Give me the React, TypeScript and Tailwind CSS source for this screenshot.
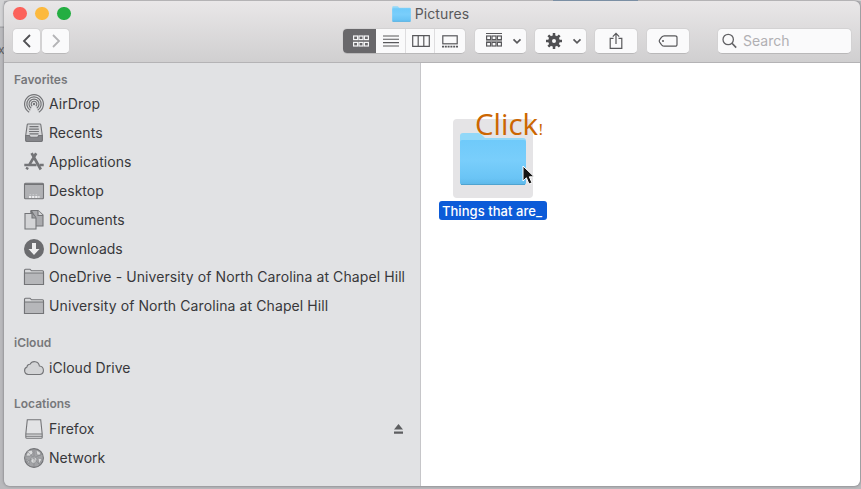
import type { ReactNode } from "react";

const dark = "#58585b";

function FolderBlue({ w, h }: { w: number; h: number }) {
  return (
    <svg width={w} height={h} viewBox="0 0 68 54" preserveAspectRatio="none">
      <defs>
        <linearGradient id="fb" x1="0" y1="0" x2="0" y2="1">
          <stop offset="0" stopColor="#6fcafa" />
          <stop offset="0.45" stopColor="#79cefb" />
          <stop offset="0.85" stopColor="#6ac4f5" />
          <stop offset="1" stopColor="#5db7e8" />
        </linearGradient>
      </defs>
      <path d="M1 4Q1 1 4 1H19Q22 1 24 4L26 6H64Q67 6 67 9V50Q67 53 64 53H4Q1 53 1 50Z" fill="#92d8f8" />
      <path d="M1 10Q1 8 3 8H65Q67 8 67 10V50Q67 53 64 53H4Q1 53 1 50Z" fill="url(#fb)" />
      <path d="M2 52.5H66" stroke="#4fa3d0" strokeWidth="1" />
    </svg>
  );
}

function Icon({ children }: { children: ReactNode }) {
  return (
    <svg className="shrink-0" width="22" height="22" viewBox="0 0 22 22" fill="none" stroke="#737477" strokeWidth="1.1">
      {children}
    </svg>
  );
}

const airdrop = (
  <Icon>
    <path d="M6.2 19.2A9.4 9.4 0 1 1 15.8 19.2M7.3 17.2A7.2 7.2 0 1 1 14.7 17.2M8.2 15.2A5 5 0 1 1 13.8 15.2M9.2 13.2A2.8 2.8 0 1 1 12.8 13.2" strokeWidth="1.2" />
    <circle cx="11" cy="11" r="1.2" fill="#737477" stroke="none" />
  </Icon>
);
const recents = (
  <Icon>
    <path d="M5 2H17Q17.7 2 17.8 2.8L19.3 13.5V18Q19.3 19.5 17.8 19.5H4.2Q2.7 19.5 2.7 18V13.5L4.2 2.8Q4.3 2 5 2Z" fill="#d5d6d8" />
    <path d="M2.7 13.5H6.3L7.3 15.3H14.7L15.7 13.5H19.3V18Q19.3 19.5 17.8 19.5H4.2Q2.7 19.5 2.7 18Z" fill="#85868a" />
    <path d="M6.5 4.7H15.5M6.2 7.1H15.8M6 9.5H16M6.5 11.9H15.5" strokeWidth="1.2" />
  </Icon>
);
const apps = (
  <Icon>
    <path d="M8.6 2.2L17.8 18.5M13.2 2.2L6.6 13.4M4.7 16.4L3.6 18.4" strokeWidth="2.7" />
    <path d="M1.3 14H13.5M16.5 14H20.7" strokeWidth="2.5" />
  </Icon>
);
const desktop = (
  <Icon>
    <rect x="1.5" y="3.3" width="19" height="15.5" rx="1" fill="#b0b1b4" />
    <path d="M2 4.4H20" strokeWidth="1.3" />
    <path d="M6 17H16.5" stroke="#ececee" strokeWidth="2" strokeDasharray="2.2 .9" />
    <path d="M6.5 14.7H15.5" stroke="#d2d3d5" strokeWidth=".8" strokeDasharray="1.6 1.4" />
  </Icon>
);
const documents = (
  <Icon>
    <path d="M8 1.5H15L20 6V17H8Z" fill="#aaabae" />
    <path d="M15 1.5V6.5H20" fill="#d5d6d8" />
    <path d="M8 2L12 8.5" strokeWidth="2" />
    <path d="M2 4.5H9L13 9V20H2Z" fill="#d3d4d6" />
    <path d="M9 4.5V9H13" fill="#a1a2a5" />
  </Icon>
);
const downloads = (
  <Icon>
    <circle cx="11" cy="11" r="10" fill="#6b6c6f" stroke="none" />
    <path d="M9 5H13V11H16.5L11 17L5.5 11H9Z" fill="#eeeeef" stroke="none" />
  </Icon>
);
const folder = (
  <Icon>
    <path d="M1.5 18.5V4.2Q1.5 3.2 2.5 3.2H7L8.5 4.8H19.5Q20.5 4.8 20.5 5.8V18.5Z" fill="#d7d8da" />
    <path d="M1.5 7H20.5V18.5H1.5Z" fill="#b6b7ba" />
  </Icon>
);
const cloud = (
  <Icon>
    <path d="M5.2 17.5A3.9 3.9 0 0 1 4 10A2.8 2.8 0 0 1 7 7.3A5 5 0 0 1 16.4 9A4.3 4.3 0 0 1 17 17.5Z" fill="#d3d4d6" />
  </Icon>
);
const drive = (
  <Icon>
    <path d="M4.3 1.8H17.7L19.2 16V19.2Q19.2 20.3 18 20.3H4Q2.8 20.3 2.8 19.2V16Z" fill="#e2e3e5" />
    <path d="M3 16H19M3 18.3H19" />
  </Icon>
);
const network = (
  <Icon>
    <circle cx="11" cy="11" r="9.4" fill="#a2a3a6" />
    <path d="M5 4L9 3L10 6L7 9L3 9ZM13 3L17 5L18 8L14 8ZM8 11L12 9L14 13L11 17L8 15ZM15 11L19 12L16 17ZM3 12L6 14L6 17Z" fill="#dadbdc" stroke="#85868a" strokeWidth="0.6" />
    <path d="M3 15L19 7M5 5L17 18M11 2V20" stroke="#7d7e82" strokeWidth="0.5" />
  </Icon>
);

function Row({ icon, label, spacing, eject }: { icon: ReactNode; label: string; spacing?: string; eject?: boolean }) {
  return (
    <div className="flex h-[28.9px] items-center pl-[19px] pr-[16px]">
      {icon}
      <span className={`ml-1 whitespace-nowrap text-[14px] leading-5 text-[#38383b] ${spacing ?? ""}`}>{label}</span>
      {eject && (
        <svg className="ml-auto" width="11" height="12" viewBox="0 0 11 12" fill="#5d5e60">
          <path d="M5.5 1L10 6.5H1ZM1 8.5H10V10.7H1Z" />
        </svg>
      )}
    </div>
  );
}

function Heading({ children }: { children: ReactNode }) {
  return <div className="pl-[10px] text-[12px] font-semibold leading-5 text-[#77787b]">{children}</div>;
}

function Button({ className, children }: { className: string; children: ReactNode }) {
  return (
    <div className={`flex h-[26px] shrink-0 items-center rounded-[5px] border border-[#d3d2d3] border-b-[#b9b8b9] bg-[#fafafb] ${className}`}>
      {children}
    </div>
  );
}

function Chevron() {
  return (
    <svg width="10" height="7" viewBox="0 0 10 7" fill="none" stroke={dark} strokeWidth="1.7">
      <path d="M1.5 1.3L5 4.8L8.5 1.3" />
    </svg>
  );
}

function Grid({ color, lines }: { color: string; lines?: boolean }) {
  return (
    <svg width="18" height="18" viewBox="0 0 18 18" fill="none" stroke={color} strokeWidth="1.2">
      {[1.6, 7, 12.4].map((x) => (
        <g key={x}>
          <rect x={x} y="4" width="4" height="3.6" />
          <rect x={x} y="10.4" width="4" height="3.6" />
        </g>
      ))}
      {lines && <path d="M1 1.5H17M1 9H17" strokeWidth="1" />}
    </svg>
  );
}

function Toolbar() {
  return (
    <div className="flex h-[28px] items-center pl-2 pr-[8px]">
      <Button className="w-[29px] justify-center">
        <svg width="12" height="16" viewBox="0 0 12 16" fill="none" stroke="#505053" strokeWidth="1.8">
          <path d="M9 2L3 8L9 14" />
        </svg>
      </Button>
      <Button className="w-[29px] justify-center">
        <svg width="12" height="16" viewBox="0 0 12 16" fill="none" stroke="#b4b4b6" strokeWidth="1.8">
          <path d="M3 2L9 8L3 14" />
        </svg>
      </Button>
      <div className="ml-[272px] flex h-[26px] w-[124px] shrink-0 overflow-hidden rounded-[5px] border border-[#d3d2d3] border-b-[#b9b8b9] bg-[#fafafb]">
        <div className="-my-px -ml-px flex w-[34px] items-center justify-center bg-[#69686b] pl-[3px]">
          <Grid color="#f4f4f5" />
        </div>
        <div className="flex w-[30px] items-center justify-center border-r border-[#dedddf]">
          <svg width="16" height="14" viewBox="0 0 16 14" stroke={dark} strokeWidth="1.1">
            <path d="M0 2H16M0 5.3H16M0 8.6H16M0 12H16" />
          </svg>
        </div>
        <div className="flex w-[29px] items-center justify-center border-r border-[#dedddf] pl-px">
          <svg width="18" height="12" viewBox="0 0 18 12" fill="none" stroke={dark} strokeWidth="1.2">
            <path d="M.7 .7H17.3V11.3H.7ZM6.2 1V11M11.8 1V11" />
          </svg>
        </div>
        <div className="flex w-[29px] items-center justify-center">
          <svg width="16" height="13" viewBox="0 0 16 13" fill="none" stroke={dark} strokeWidth="1.2">
            <rect x=".8" y=".8" width="14.4" height="8" />
            <path d="M0 11.6H16" strokeWidth="1.6" strokeDasharray="2 .8" />
          </svg>
        </div>
      </div>
      <Button className="ml-2 w-[53px] gap-[9px] pl-[9.5px]">
        <Grid color={dark} lines />
        <Chevron />
      </Button>
      <Button className="ml-[7px] w-[53px] gap-[9px] pl-[10px]">
        <svg width="18" height="18" viewBox="0 0 18 18" fill="none" stroke="#505053">
          <circle cx="9" cy="9" r="3.9" strokeWidth="3.8" />
          <path d="M9 1V4M9 14V17M1 9H4M14 9H17M3.3 3.3L5.5 5.5M12.5 12.5L14.7 14.7M3.3 14.7L5.5 12.5M12.5 5.5L14.7 3.3" strokeWidth="2.5" />
        </svg>
        <Chevron />
      </Button>
      <Button className="ml-[7px] w-[44px] justify-center">
        <svg width="14" height="18" viewBox="0 0 14 18" fill="none" stroke={dark} strokeWidth="1.2">
          <path d="M4.5 6.3H1.2V16.3H12.8V6.3H9.5M7 12V1.5M3.8 4.6L7 1.4L10.2 4.6" />
        </svg>
      </Button>
      <Button className="ml-[8px] w-[44px] justify-center">
        <svg width="20" height="12" viewBox="0 0 20 12" fill="none" stroke={dark} strokeWidth="1.2">
          <path d="M6.3 .8H17Q19 .8 19 2.6V9.4Q19 11.2 17 11.2H6.3Q4.8 11.2 3.6 9.8L1.6 7.2Q.8 6 1.6 4.8L3.6 2.2Q4.8 .8 6.3 .8Z" />
          <circle cx="5" cy="6" r="1" fill={dark} stroke="none" />
        </svg>
      </Button>
      <Button className="ml-auto w-[135px] pl-[4px]">
        <svg width="15" height="16" viewBox="0 0 15 16" fill="none" stroke="#626265" strokeWidth="1.3">
          <circle cx="6.2" cy="6.5" r="5.2" />
          <path d="M10 10.3L14.2 14.6" strokeWidth="1.6" />
        </svg>
        <span className="ml-[6px] text-[14px] leading-5 text-[#b1b0b3]">Search</span>
      </Button>
    </div>
  );
}

export default function App() {
  return (
    <div className="flex h-[489px] w-[861px] flex-col overflow-hidden bg-[#b9b9bc] font-['Inter','Liberation_Sans',sans-serif]">
      <div className="relative h-px shrink-0 bg-[#d4d3d4]">
        <div className="absolute left-[553px] top-0 h-[2px] w-[85px] bg-[#8ba4be]" />
        <div className="absolute left-0 top-0 h-[26px] w-1 bg-[#d2d2d4]" />
        <div className="absolute left-0 top-[27px] h-px w-1 bg-[#a5a5a8]" />
        <div className="absolute -left-[2px] top-[40px] text-[12px] leading-5 text-[#59595b]">x</div>
      </div>
      <div className="relative ml-[4px] flex h-[485px] w-[856px] flex-col overflow-hidden rounded-[6px] shadow-[0_0_2px_1px_rgba(70,70,75,0.3)]">
        <div className="h-[62px] shrink-0 border-b border-[#b4b3b5] bg-gradient-to-b from-[#e9e7e8] to-[#d0cfd0]">
          <div className="relative flex h-[25px] items-center justify-center">
            <div className="absolute left-[9px] top-[5.5px] flex gap-[8.7px]">
              <i className="size-[13.5px] rounded-full bg-[#fc625b]" />
              <i className="size-[13.5px] rounded-full bg-[#fcb93d]" />
              <i className="size-[13.5px] rounded-full bg-[#24ae42]" />
            </div>
            <div className="flex items-center gap-[4px] pr-[3px] pt-px">
              <FolderBlue w={19} h={16} />
              <span className="text-[14px] leading-5 tracking-[0.1px] text-[#59595b]">Pictures</span>
            </div>
          </div>
          <div className="pt-[1px]">
            <Toolbar />
          </div>
        </div>
        <div className="flex flex-1">
          <div className="w-[417px] shrink-0 border-r border-[#c6c6c9] bg-[#e1e2e4] pt-[6.7px]">
            <Heading>Favorites</Heading>
            <Row icon={airdrop} label="AirDrop" spacing="tracking-[0.05px]" />
            <Row icon={recents} label="Recents" spacing="tracking-[0.05px]" />
            <Row icon={apps} label="Applications" spacing="tracking-[0.08px]" />
            <Row icon={desktop} label="Desktop" />
            <Row icon={documents} label="Documents" spacing="tracking-[0.05px]" />
            <Row icon={downloads} label="Downloads" />
            <Row icon={folder} label="OneDrive - University of North Carolina at Chapel Hill" spacing="tracking-[0.09px]" />
            <Row icon={folder} label="University of North Carolina at Chapel Hill" spacing="tracking-[0.1px]" />
            <div className="h-[12.2px]" />
            <Heading>iCloud</Heading>
            <div className="h-[0.6px]" />
            <Row icon={cloud} label="iCloud Drive" spacing="tracking-[0.05px]" />
            <div className="h-[11.4px]" />
            <Heading>Locations</Heading>
            <div className="h-[0.6px]" />
            <Row icon={drive} label="Firefox" eject />
            <Row icon={network} label="Network" />
          </div>
          <div className="flex-1 bg-white">
            <div className="relative ml-[17px] mt-[56px] flex w-[110px] flex-col items-center">
              <div className="flex h-[79px] w-[80px] items-center justify-center rounded-[4px] bg-[#e5e4e6]">
                <FolderBlue w={68} h={54} />
              </div>
              <div className="mt-[3px] flex h-[19px] w-[108px] items-center justify-center whitespace-nowrap rounded-[3px] bg-[#0c5bd8] pr-[2px] text-[13px] font-medium leading-5 tracking-[0.06px] text-white">
                Things that are_
              </div>
              <div className="absolute left-[37px] -top-[15px] flex items-baseline whitespace-nowrap text-[#cc6600]">
                <span className="font-['Open_Sans'] text-[29.5px] leading-10">Click</span>
                <span className="font-['Liberation_Serif'] text-[17px]">!</span>
              </div>
              <svg className="absolute left-[84px] top-[46px]" width="14" height="21" viewBox="0 0 14 21">
                <path d="M1 1V16L4.4 12.8L7 19L10 17.8L7.3 11.8H12.2Z" fill="#151515" stroke="#fff" strokeWidth="1" />
              </svg>
            </div>
          </div>
        </div>
      </div>
    </div>
  );
}
